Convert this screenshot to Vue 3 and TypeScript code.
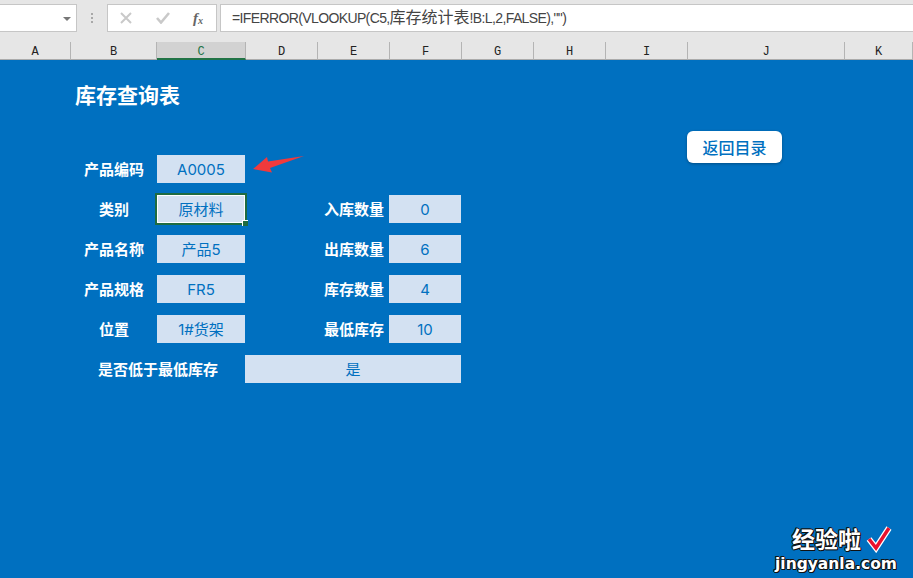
<template>
  <div class="page">
    <div class="formula-bar">
      <div class="name-box"><span class="caret"></span></div>
      <div class="grip"><i></i><i></i><i></i></div>
      <div class="fx-buttons">
        <svg class="fx-cancel" width="12" height="12" viewBox="0 0 12 12">
          <path d="M1 1 L11 11 M11 1 L1 11" stroke="#c9c9c9" stroke-width="2" fill="none" />
        </svg>
        <svg class="fx-ok" width="14" height="12" viewBox="0 0 14 12">
          <path d="M1 6 L5 10.5 L13 1" stroke="#c9c9c9" stroke-width="2.6" fill="none" />
        </svg>
        <span class="fx">f<sub>x</sub></span>
      </div>
      <div class="formula-input">=IFERROR(VLOOKUP(C5,<span class="formula-cjk">库存统计表</span>!B:L,2,FALSE),"")</div>
    </div>

    <div class="col-headers">
      <div
        v-for="col in columns"
        :key="col.name"
        class="col-header"
        :class="{ active: col.name === 'C' }"
        :style="{ width: col.width + 'px' }"
      >
        {{ col.name }}
      </div>
    </div>

    <div class="sheet">
      <div class="title">库存查询表</div>

      <div class="form">
        <template v-for="row in rows" :key="row.label">
          <div class="label left-label">{{ row.label }}</div>
          <div class="cell" :class="{ selected: row.selected }">
            {{ row.value }}
            <span v-if="row.selected" class="handle"></span>
          </div>
          <template v-if="row.rightLabel">
            <div class="label right-label">{{ row.rightLabel }}</div>
            <div class="cell">{{ row.rightValue }}</div>
          </template>
        </template>
        <div class="label wide-label">是否低于最低库存</div>
        <div class="cell wide-cell">是</div>
      </div>

      <button class="back-btn">返回目录</button>

      <svg class="arrow" width="56" height="20" viewBox="0 0 56 20">
        <path d="M53 1 L17 6.5 L16 2 L2 14 L21 17.5 L19 13 Z" fill="#f03a3c" />
      </svg>

      <div class="watermark">
        <div class="wm-top">
          <span class="wm-cn">经验啦</span>
          <svg class="wm-check" width="28" height="28" viewBox="0 0 28 28">
            <path d="M3 14 L10 23 L23 3" stroke="#fff" stroke-width="6" fill="none" />
            <path d="M3 14 L10 23 L23 3" stroke="#e8112d" stroke-width="3.5" fill="none" />
          </svg>
        </div>
        <div class="wm-en">jingyanla.com</div>
      </div>
    </div>
  </div>
</template>

<script setup lang="ts">
const columns = [
  { name: 'A', width: 71 },
  { name: 'B', width: 86 },
  { name: 'C', width: 89 },
  { name: 'D', width: 72 },
  { name: 'E', width: 72 },
  { name: 'F', width: 72 },
  { name: 'G', width: 72 },
  { name: 'H', width: 72 },
  { name: 'I', width: 82 },
  { name: 'J', width: 157 },
  { name: 'K', width: 68 },
]

const rows = [
  { label: '产品编码', value: 'A0005' },
  { label: '类别', value: '原材料', selected: true, rightLabel: '入库数量', rightValue: '0' },
  { label: '产品名称', value: '产品5', rightLabel: '出库数量', rightValue: '6' },
  { label: '产品规格', value: 'FR5', rightLabel: '库存数量', rightValue: '4' },
  { label: '位置', value: '1#货架', rightLabel: '最低库存', rightValue: '10' },
]
</script>

<style>
html,
body {
  margin: 0;
  background: #0070c0;
}
</style>

<style scoped>
.page {
  width: 913px;
  height: 578px;
  overflow: hidden;
  display: flex;
  flex-direction: column;
  background: #e6e6e6;
  font-family: "Liberation Sans", "Noto Sans CJK SC", sans-serif;
}

.formula-bar {
  height: 42px;
  box-sizing: border-box;
  padding-top: 4px;
  display: flex;
  align-items: flex-start;
}

.name-box {
  width: 77px;
  height: 28px;
  box-sizing: border-box;
  background: #fff;
  border: 1px solid #c6c6c6;
  border-left: none;
  position: relative;
}

.caret {
  position: absolute;
  right: 5px;
  top: 12px;
  border-left: 4px solid transparent;
  border-right: 4px solid transparent;
  border-top: 4px solid #777;
}

.grip {
  width: 30px;
  height: 28px;
  display: flex;
  flex-direction: column;
  align-items: center;
  justify-content: center;
  gap: 2px;
}

.grip i {
  width: 2px;
  height: 2px;
  background: #a8a8a8;
}

.fx-buttons {
  width: 110px;
  height: 28px;
  box-sizing: border-box;
  background: #fff;
  border: 1px solid #c6c6c6;
  display: flex;
  align-items: center;
  padding-left: 12px;
}

.fx-cancel {
  margin-right: 24px;
}

.fx-ok {
  margin-right: 23px;
}

.fx {
  font-family: "Liberation Serif", serif;
  font-style: italic;
  font-weight: bold;
  font-size: 15px;
  line-height: 20px;
  color: #666;
}

.fx sub {
  font-size: 10px;
  line-height: 0;
  vertical-align: -1px;
}

.formula-input {
  flex: 1;
  height: 28px;
  margin-left: 3px;
  box-sizing: border-box;
  background: #fff;
  border: 1px solid #c6c6c6;
  border-right: none;
  padding-left: 11px;
  line-height: 26px;
  font-size: 14px;
  letter-spacing: -0.62px;
  color: #444;
  white-space: nowrap;
}

.formula-cjk {
  font-size: 16px;
  letter-spacing: 0;
}

.col-headers {
  height: 18px;
  display: flex;
}

.col-header {
  box-sizing: border-box;
  height: 18px;
  flex-shrink: 0;
  border-right: 1px solid #b4b4b4;
  border-bottom: 1px solid #ababab;
  text-align: center;
  line-height: 21px;
  font-family: "Liberation Mono", monospace;
  font-size: 12px;
  color: #222;
}

.col-header.active {
  background: #d2d2d2;
  color: #217346;
  border-bottom: 2px solid #217346;
}

.sheet {
  flex: 1;
  position: relative;
  background: #0070c0;
  padding-top: 22px;
}

.title {
  margin-left: 75px;
  height: 28px;
  line-height: 28px;
  font-size: 21px;
  font-weight: bold;
  color: #fff;
}

.form {
  margin-top: 45px;
  display: grid;
  grid-template-columns: 71px 86px 88px 72px 72px 72px;
  grid-auto-rows: 28px;
  row-gap: 12px;
  font-size: 15px;
}

.label {
  line-height: 30px;
  font-weight: bold;
  color: #fff;
  white-space: nowrap;
}

.left-label {
  grid-column: 2;
  text-align: center;
}

.right-label {
  grid-column: 4 / 6;
  text-align: right;
  padding-right: 5px;
}

.wide-label {
  grid-column: 2 / 4;
  text-align: center;
}

.cell {
  position: relative;
  background: #d3e1f2;
  color: #0070c0;
  text-align: center;
  line-height: 30px;
  font-family: Inter, "Noto Sans CJK SC", sans-serif;
  font-size: 15px;
}

.left-label + .cell {
  grid-column: 3;
}

.right-label + .cell {
  grid-column: 6;
}

.wide-cell {
  grid-column: 4 / 7;
}

.selected {
  outline: 2px solid #1e6b41;
  outline-offset: 0;
  box-shadow: inset 0 0 0 1px #fff;
}

.handle {
  position: absolute;
  right: -3px;
  bottom: -3px;
  width: 5px;
  height: 5px;
  background: #1e6b41;
  border-left: 1px solid #fff;
  border-top: 1px solid #fff;
}

.back-btn {
  position: absolute;
  left: 687px;
  top: 71px;
  width: 95px;
  height: 32px;
  padding: 0;
  border: none;
  border-radius: 6px;
  background: #fff;
  box-shadow: 0 1px 3px rgba(0, 0, 0, 0.3);
  color: #0070c0;
  font-family: inherit;
  font-size: 16px;
  font-weight: 500;
}

.arrow {
  position: absolute;
  left: 251px;
  top: 95px;
}

.watermark {
  position: absolute;
  left: 775px;
  top: 466px;
  width: 130px;
  color: #fff;
  font-weight: bold;
  text-shadow: 1px 0 0 #111, -1px 0 0 #111, 0 1px 0 #111, 0 -1px 0 #111, 1px 1px 0 #111, -1px -1px 0 #111;
}

.wm-top {
  display: flex;
  align-items: center;
  height: 28px;
  padding-left: 17px;
}

.wm-cn {
  font-size: 23px;
  line-height: 28px;
}

.wm-check {
  margin-left: 5px;
  margin-top: -2px;
}

.wm-en {
  font-family: "DejaVu Sans", sans-serif;
  font-size: 15.5px;
  line-height: 20px;
  white-space: nowrap;
}
</style>
